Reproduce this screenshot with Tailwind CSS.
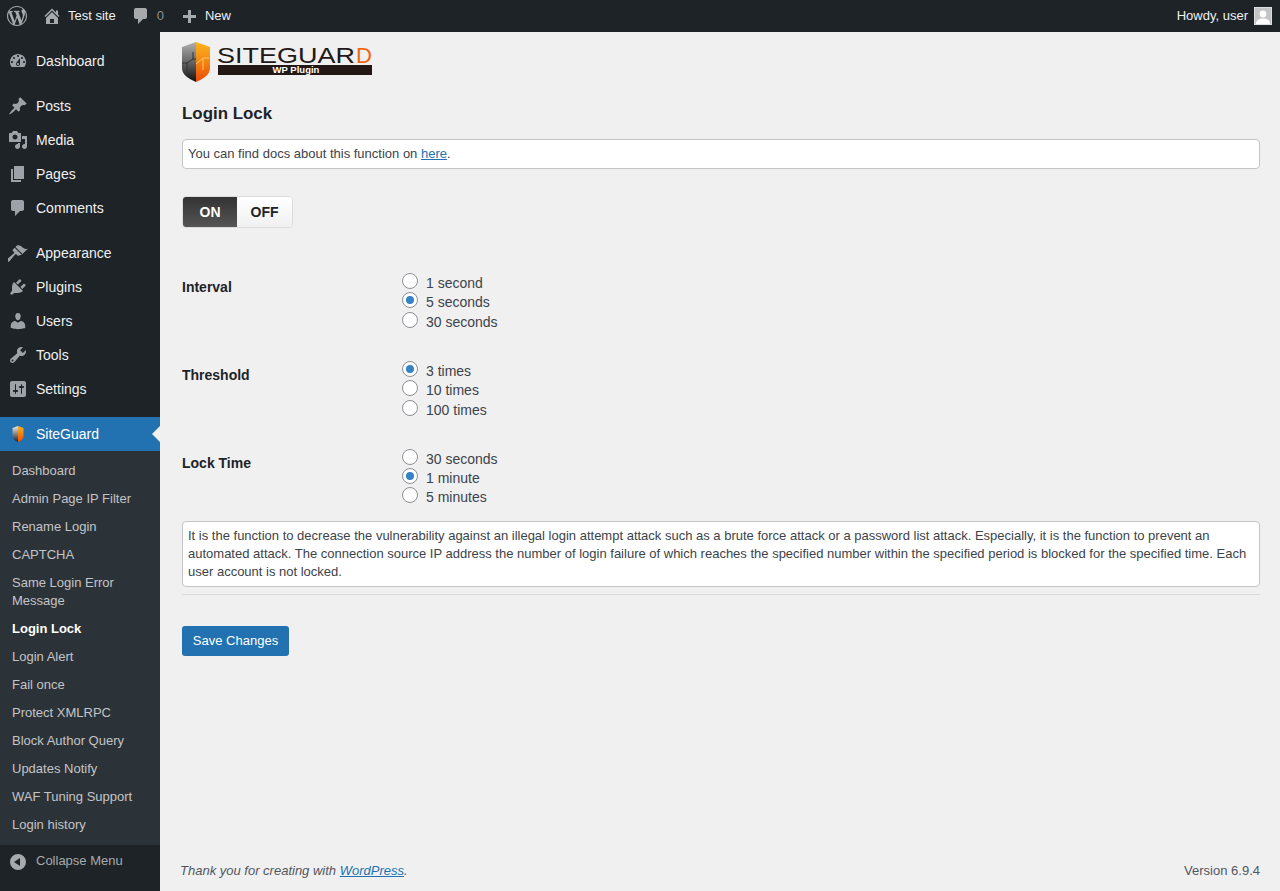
<!DOCTYPE html>
<html lang="en">
<head>
    <meta charset="UTF-8">
    <meta name="viewport" content="width=device-width, initial-scale=1.0">
    <title>Login Lock</title>
    <script src="https://cdn.jsdelivr.net/npm/@tailwindcss/browser@4"></script>
</head>
<body class="bg-[#f0f0f1] text-[#3c434a] font-['Liberation_Sans',Arial,sans-serif] text-[13px] leading-[18px] h-[891px] overflow-hidden">

    <!-- admin bar -->
    <header class="h-8 bg-[#1d2327] flex items-center justify-between text-[#f0f0f1]">
        <div class="flex items-center h-8">
            <svg class="w-5 h-5 ml-[7px] fill-[#a7aaad]" viewBox="0 0 20 20"><path d="M20 10c0-5.51-4.49-10-10-10C4.48 0 0 4.49 0 10c0 5.52 4.48 10 10 10 5.51 0 10-4.48 10-10zM7.78 15.37L4.37 6.22c.55-.02 1.17-.08 1.17-.08.5-.06.44-1.13-.06-1.11 0 0-1.45.11-2.37.11-.18 0-.37 0-.58-.01C4.12 2.69 6.87 1.11 10 1.11c2.33 0 4.45.87 6.05 2.34-.68-.11-1.65.39-1.65 1.58 0 .74.45 1.36.9 2.1.35.61.55 1.36.55 2.46 0 1.49-1.4 5-1.4 5l-3.03-8.37c.54-.02.82-.17.82-.17.5-.05.44-1.25-.06-1.22 0 0-1.44.12-2.38.12-.87 0-2.33-.12-2.33-.12-.5-.03-.56 1.2-.06 1.22l.92.08 1.26 3.41zM17.41 10c.24-.64.74-1.87.43-4.25.7 1.29 1.05 2.71 1.05 4.25 0 3.29-1.73 6.24-4.4 7.78.97-2.59 1.94-5.2 2.92-7.78zM6.1 18.09C3.12 16.65 1.11 13.53 1.11 10c0-1.3.23-2.48.72-3.59C3.25 10.3 4.67 14.2 6.1 18.09zm4.03-6.63l2.58 6.98c-.86.29-1.76.45-2.71.45-.79 0-1.57-.11-2.29-.33.81-2.38 1.62-4.74 2.42-7.1z"/></svg>
            <svg class="w-5 h-5 ml-[15px] fill-[#a7aaad]" viewBox="0 0 20 20"><path d="M16 8.5l1.53 1.53-1.06 1.06L10 4.62l-6.47 6.47-1.06-1.06L10 2.5l4 4v-2h2v4zm-6-2.46l6 5.99V18H4v-6.03zM8 17h4v-4H8v4z"/></svg>
            <span class="ml-1.5">Test site</span>
            <svg class="w-5 h-5 ml-[15px] fill-[#a7aaad]" viewBox="0 0 20 20"><path d="M5 2h9c1.1 0 2 .9 2 2v7c0 1.1-.9 2-2 2h-2l-5 5v-5H5c-1.1 0-2-.9-2-2V4c0-1.1.9-2 2-2z"/></svg>
            <span class="ml-1.5 text-[#8c8f94]">0</span>
            <svg class="w-5 h-5 ml-[15px] mt-1 fill-[#a7aaad]" viewBox="0 0 20 20"><path d="M17 7v3h-5v5H9v-5H4V7h5V2h3v5h5z"/></svg>
            <span class="ml-1.5">New</span>
        </div>
        <div class="flex items-center gap-1.5 pr-2">
            <span>Howdy, user</span>
            <div class="w-[18px] h-[18px] bg-[#c3c4c7] border border-[#dcdcde] overflow-hidden">
                <svg class="w-4 h-4 fill-white" viewBox="0 0 16 16"><circle cx="8" cy="6" r="3.4"/><path d="M1 16c0-4 3-5.5 7-5.5s7 1.5 7 5.5z"/></svg>
            </div>
        </div>
    </header>

    <div class="flex h-[859px]">
        <!-- sidebar -->
        <aside class="w-40 shrink-0 bg-[#1d2327] text-[#f0f0f1] text-sm pt-3">
            <a class="flex items-center h-[34px] pl-2 gap-2 mb-[11px]">
                <svg class="w-5 h-5 fill-[#9ca2a7]" viewBox="0 0 20 20"><path d="M3.76 16h12.48c1.1-1.37 1.76-3.11 1.76-5 0-4.42-3.58-8-8-8s-8 3.58-8 8c0 1.89.66 3.63 1.76 5zM10 4c.55 0 1 .45 1 1s-.45 1-1 1-1-.45-1-1 .45-1 1-1zM6 6c.55 0 1 .45 1 1s-.45 1-1 1-1-.45-1-1 .45-1 1-1zm8 0c.55 0 1 .45 1 1s-.45 1-1 1-1-.45-1-1 .45-1 1-1zm-5.37 5.55L12 7v6c0 1.1-.9 2-2 2s-2-.9-2-2c0-.57.24-1.08.63-1.45zM4 10c.55 0 1 .45 1 1s-.45 1-1 1-1-.45-1-1 .45-1 1-1zm12 0c.55 0 1 .45 1 1s-.45 1-1 1-1-.45-1-1 .45-1 1-1zm-5 3c0-.55-.45-1-1-1s-1 .45-1 1 .45 1 1 1 1-.45 1-1z"/></svg>
                Dashboard
            </a>
            <a class="flex items-center h-[34px] pl-2 gap-2">
                <svg class="w-5 h-5 fill-[#9ca2a7]" viewBox="0 0 20 20"><path d="M10.44 3.02l1.82-1.82 6.36 6.35-1.83 1.82c-1.05-.68-2.48-.57-3.41.36l-.75.75c-.92.93-1.04 2.35-.35 3.41l-1.83 1.82-2.41-2.41-2.8 2.79c-.42.42-3.38 2.71-3.8 2.29s1.86-3.39 2.28-3.81l2.79-2.79L4.1 9.36l1.83-1.82c1.05.69 2.48.57 3.4-.36l.75-.75c.93-.92 1.05-2.35.36-3.41z"/></svg>
                Posts
            </a>
            <a class="flex items-center h-[34px] pl-2 gap-2">
                <svg class="w-5 h-5 fill-[#9ca2a7]" viewBox="0 0 20 20"><path d="M13 11V4c0-.55-.45-1-1-1h-1.67L9 1H5L3.67 3H2c-.55 0-1 .45-1 1v7c0 .55.45 1 1 1h10c.55 0 1-.45 1-1zM7 4.5c1.38 0 2.5 1.12 2.5 2.5S8.38 9.5 7 9.5 4.5 8.38 4.5 7 5.62 4.5 7 4.5zM14 6h5v10.5c0 1.38-1.12 2.5-2.5 2.5S14 17.88 14 16.5s1.12-2.5 2.5-2.5c.17 0 .34.02.5.05V9h-3V6zm-4 8.05V13h2v3.5c0 1.38-1.12 2.5-2.5 2.5S7 17.88 7 16.5 8.12 14 9.5 14c.17 0 .34.02.5.05z"/></svg>
                Media
            </a>
            <a class="flex items-center h-[34px] pl-2 gap-2">
                <svg class="w-5 h-5 fill-[#9ca2a7]" viewBox="0 0 20 20"><path d="M6 15V2h10v13H6zm-1 1h8v2H3V5h2v11z"/></svg>
                Pages
            </a>
            <a class="flex items-center h-[34px] pl-2 gap-2 mb-[11px]">
                <svg class="w-5 h-5 fill-[#9ca2a7]" viewBox="0 0 20 20"><path d="M5 2h9c1.1 0 2 .9 2 2v7c0 1.1-.9 2-2 2h-2l-5 5v-5H5c-1.1 0-2-.9-2-2V4c0-1.1.9-2 2-2z"/></svg>
                Comments
            </a>
            <a class="flex items-center h-[34px] pl-2 gap-2">
                <svg class="w-5 h-5 fill-[#9ca2a7]" viewBox="0 0 20 20"><path d="M14.48 11.06L7.41 3.99l1.5-1.5c.5-.56 2.3-.47 3.51.32 1.21.8 1.43 1.28 2.91 2.1 1.18.64 2.45 1.26 4.45.85zm-.71.71L6.7 4.7 4.93 6.47c-.39.39-.39 1.02 0 1.41l1.06 1.06c.39.39.39 1.03 0 1.42-.6.6-6.48 5.32-6.48 5.32-.93.78-1.01 1.94-.32 2.63.7.69 1.85.61 2.63-.32 0 0 4.72-5.88 5.32-6.48.39-.39 1.03-.39 1.42 0l1.06 1.06c.39.39 1.02.39 1.41 0z"/></svg>
                Appearance
            </a>
            <a class="flex items-center h-[34px] pl-2 gap-2">
                <svg class="w-5 h-5 fill-[#9ca2a7]" viewBox="0 0 20 20"><path d="M13.11 4.36L9.87 7.6 8 5.73l3.24-3.24c.35-.34 1.05-.2 1.56.32.52.51.66 1.21.31 1.55zm-8 1.77l.91-1.12 9.01 9.01-1.19.84c-.71.71-2.63 1.16-3.82 1.16H6.14L4.9 17.26c-.59.59-1.54.59-2.12 0-.59-.58-.59-1.53 0-2.12l1.24-1.24v-3.88c0-1.13.4-3.19 1.09-3.89zm7.26 3.97l3.24-3.24c.34-.35 1.04-.21 1.55.31.52.51.66 1.21.31 1.55l-3.24 3.25z"/></svg>
                Plugins
            </a>
            <a class="flex items-center h-[34px] pl-2 gap-2">
                <svg class="w-5 h-5 fill-[#9ca2a7]" viewBox="0 0 20 20"><path d="M10 9.25c-2.27 0-2.73-3.44-2.73-3.44C7 4.02 7.82 2 9.97 2c2.16 0 2.98 2.02 2.71 3.81 0 0-.41 3.44-2.68 3.44zm0 2.57L12.72 10c2.39 0 4.52 2.33 4.52 4.53v2.49s-3.65 1.13-7.24 1.13c-3.65 0-7.24-1.13-7.24-1.13v-2.49c0-2.25 1.94-4.48 4.47-4.48z"/></svg>
                Users
            </a>
            <a class="flex items-center h-[34px] pl-2 gap-2">
                <svg class="w-5 h-5 fill-[#9ca2a7]" viewBox="0 0 20 20"><path d="M16.68 9.77c-1.34 1.34-3.3 1.67-4.95.99l-5.41 6.52c-.99.99-2.59.99-3.58 0s-.99-2.59 0-3.57l6.52-5.42c-.68-1.65-.35-3.61.99-4.95 1.28-1.28 3.12-1.62 4.72-1.06l-2.89 2.89 2.82 2.82 2.86-2.87c.53 1.58.18 3.39-1.08 4.65zM3.81 16.21c.4.39 1.04.39 1.43 0 .4-.4.4-1.04 0-1.43-.39-.4-1.03-.4-1.43 0-.39.39-.39 1.03 0 1.43z"/></svg>
                Tools
            </a>
            <a class="flex items-center h-[34px] pl-2 gap-2 mb-[11px]">
                <svg class="w-5 h-5 fill-[#9ca2a7]" viewBox="0 0 20 20"><path d="M18 16V4c0-1.1-.9-2-2-2H4c-1.1 0-2 .9-2 2v12c0 1.1.9 2 2 2h12c1.1 0 2-.9 2-2zM8 11h1c.55 0 1 .45 1 1s-.45 1-1 1H8v1.5c0 .28-.22.5-.5.5s-.5-.22-.5-.5V13H6c-.55 0-1-.45-1-1s.45-1 1-1h1V5.5c0-.28.22-.5.5-.5s.5.22.5.5V11zm5-2h-1c-.55 0-1-.45-1-1s.45-1 1-1h1V5.5c0-.28.22-.5.5-.5s.5.22.5.5V7h1c.55 0 1 .45 1 1s-.45 1-1 1h-1v5.5c0 .28-.22.5-.5.5s-.5-.22-.5-.5V9z"/></svg>
                Settings
            </a>
            <a class="relative flex items-center h-[34px] pl-2 gap-2 bg-[#2271b1] text-white">
                <svg class="w-5 h-5" viewBox="0 0 20 20">
                    <defs>
                        <linearGradient id="miniLeft" x1="0" y1="0" x2="0" y2="1">
                            <stop offset="0" stop-color="#e8e8e8"/>
                            <stop offset="1" stop-color="#222"/>
                        </linearGradient>
                        <linearGradient id="miniRight" x1="0" y1="0" x2="0" y2="1">
                            <stop offset="0" stop-color="#fbb41f"/>
                            <stop offset="1" stop-color="#ea4a06"/>
                        </linearGradient>
                    </defs>
                    <path d="M10 2L4.5 4v8c0 3 2.5 5 5.5 6z" fill="url(#miniLeft)"/>
                    <path d="M10 2l5.5 2v8c0 3-2.5 5-5.5 6z" fill="url(#miniRight)"/>
                </svg>
                SiteGuard
                <span class="absolute right-0 top-[9px] border-y-8 border-r-8 border-y-transparent border-r-[#f0f0f1]"></span>
            </a>
            <nav class="bg-[#2c3338] pt-[6px] pb-[6px] text-[13px] leading-[18px] text-[#c3c4c7]">
                <a class="block px-3 py-[5px]">Dashboard</a>
                <a class="block px-3 py-[5px]">Admin Page IP Filter</a>
                <a class="block px-3 py-[5px]">Rename Login</a>
                <a class="block px-3 py-[5px]">CAPTCHA</a>
                <a class="block px-3 py-[5px]">Same Login Error Message</a>
                <a class="block px-3 py-[5px] font-semibold text-white">Login Lock</a>
                <a class="block px-3 py-[5px]">Login Alert</a>
                <a class="block px-3 py-[5px]">Fail once</a>
                <a class="block px-3 py-[5px]">Protect XMLRPC</a>
                <a class="block px-3 py-[5px]">Block Author Query</a>
                <a class="block px-3 py-[5px]">Updates Notify</a>
                <a class="block px-3 py-[5px]">WAF Tuning Support</a>
                <a class="block px-3 py-[5px]">Login history</a>
            </nav>
            <a class="flex items-start pl-2 gap-2 pt-[7px] text-[13px] leading-[18px] text-[#a7aaad]">
                <svg class="w-5 h-5 fill-[#a7aaad]" viewBox="0 0 20 20"><path d="M10 18a8 8 0 1 0 0-16 8 8 0 1 0 0 16zm2-12v8l-6-4z"/></svg>
                Collapse Menu
            </a>
        </aside>

        <!-- content -->
        <div class="flex-1 flex flex-col">
            <main class="pl-[22px] pr-5 flex-1">
                <div class="pt-2.5 h-[50px]">
                    <svg class="block w-[192px] h-10" viewBox="0 0 192 40">
                        <defs>
                            <linearGradient id="shieldLeft" x1="0" y1="0" x2="0" y2="1">
                                <stop offset="0" stop-color="#b0b0b0"/>
                                <stop offset="0.5" stop-color="#666"/>
                                <stop offset="1" stop-color="#111"/>
                            </linearGradient>
                            <linearGradient id="shieldRight" x1="0" y1="0" x2="0" y2="1">
                                <stop offset="0" stop-color="#fbb41f"/>
                                <stop offset="0.45" stop-color="#f58a12"/>
                                <stop offset="1" stop-color="#ea4a06"/>
                            </linearGradient>
                        </defs>
                        <path d="M14 0L0 5v21c0 7 7 11 14 14z" fill="url(#shieldLeft)"/>
                        <path d="M14 0l14 5v21c0 7-7 11-14 14z" fill="url(#shieldRight)"/>
                        <path d="M0 21h5l6-4h3M11 10v7M5 21v8" fill="none" stroke="#333" stroke-width="1"/>
                        <path d="M14 22l7-6h6M21 16v12" fill="none" stroke="#fcc66a" stroke-width="1"/>
                        <text x="35" y="21" font-family="Liberation Sans" font-size="22" fill="#231815" textLength="138" lengthAdjust="spacingAndGlyphs">SITEGUAR</text>
                        <text x="174" y="21" font-family="Liberation Sans" font-size="22" fill="#f0660f" textLength="16" lengthAdjust="spacingAndGlyphs">D</text>
                        <rect x="36" y="23" width="154" height="10" fill="#231815"/>
                        <text x="114" y="31" text-anchor="middle" font-family="Liberation Sans" font-weight="700" font-size="9.5" fill="#fff">WP Plugin</text>
                    </svg>
                </div>
                <h1 class="mt-[21px] font-bold text-[16.9px] leading-[22px] text-[#1d2327]">Login Lock</h1>
                <div class="mt-[14px] h-[30px] px-[5px] py-[5px] bg-white border border-[#c3c4c7] rounded-[4px]">You can find docs about this function on <a class="text-[#2271b1] underline">here</a>.</div>

                <div class="mt-[27px] w-[111px] h-8 flex border border-[#dcdcde] rounded-[4px] bg-white font-bold text-sm overflow-hidden">
                    <span class="w-[54px] flex items-center justify-center text-white bg-gradient-to-b from-[#333] to-[#555]">ON</span>
                    <span class="flex-1 flex items-center justify-center text-[#1d2327] bg-gradient-to-b from-white to-[#f0f0f1]">OFF</span>
                </div>

                <div class="mt-[30px] grid grid-cols-[220px_1fr] text-sm">
                    <div class="pt-5 font-bold text-[#1d2327] leading-[18px]">Interval</div>
                    <div class="pt-[14.9px] h-[87.9px]">
                        <label class="flex gap-2 h-[19.5px]"><input type="radio" name="interval" class="appearance-none flex items-center justify-center w-4 h-4 shrink-0 rounded-full border border-[#8c8f94] bg-white before:hidden checked:before:block before:w-2 before:h-2 before:rounded-full before:bg-[#3582c4]"><span class="leading-5">1 second</span></label>
                        <label class="flex gap-2 h-[19.5px]"><input type="radio" name="interval" checked class="appearance-none flex items-center justify-center w-4 h-4 shrink-0 rounded-full border border-[#8c8f94] bg-white before:hidden checked:before:block before:w-2 before:h-2 before:rounded-full before:bg-[#3582c4]"><span class="leading-5">5 seconds</span></label>
                        <label class="flex gap-2 h-[19.5px]"><input type="radio" name="interval" class="appearance-none flex items-center justify-center w-4 h-4 shrink-0 rounded-full border border-[#8c8f94] bg-white before:hidden checked:before:block before:w-2 before:h-2 before:rounded-full before:bg-[#3582c4]"><span class="leading-5">30 seconds</span></label>
                    </div>
                    <div class="pt-5 font-bold text-[#1d2327] leading-[18px]">Threshold</div>
                    <div class="pt-[14.9px] h-[87.9px]">
                        <label class="flex gap-2 h-[19.5px]"><input type="radio" name="threshold" checked class="appearance-none flex items-center justify-center w-4 h-4 shrink-0 rounded-full border border-[#8c8f94] bg-white before:hidden checked:before:block before:w-2 before:h-2 before:rounded-full before:bg-[#3582c4]"><span class="leading-5">3 times</span></label>
                        <label class="flex gap-2 h-[19.5px]"><input type="radio" name="threshold" class="appearance-none flex items-center justify-center w-4 h-4 shrink-0 rounded-full border border-[#8c8f94] bg-white before:hidden checked:before:block before:w-2 before:h-2 before:rounded-full before:bg-[#3582c4]"><span class="leading-5">10 times</span></label>
                        <label class="flex gap-2 h-[19.5px]"><input type="radio" name="threshold" class="appearance-none flex items-center justify-center w-4 h-4 shrink-0 rounded-full border border-[#8c8f94] bg-white before:hidden checked:before:block before:w-2 before:h-2 before:rounded-full before:bg-[#3582c4]"><span class="leading-5">100 times</span></label>
                    </div>
                    <div class="pt-5 font-bold text-[#1d2327] leading-[18px]">Lock Time</div>
                    <div class="pt-[14.9px] h-[87.2px]">
                        <label class="flex gap-2 h-[19.3px]"><input type="radio" name="locktime" class="appearance-none flex items-center justify-center w-4 h-4 shrink-0 rounded-full border border-[#8c8f94] bg-white before:hidden checked:before:block before:w-2 before:h-2 before:rounded-full before:bg-[#3582c4]"><span class="leading-5">30 seconds</span></label>
                        <label class="flex gap-2 h-[19.3px]"><input type="radio" name="locktime" checked class="appearance-none flex items-center justify-center w-4 h-4 shrink-0 rounded-full border border-[#8c8f94] bg-white before:hidden checked:before:block before:w-2 before:h-2 before:rounded-full before:bg-[#3582c4]"><span class="leading-5">1 minute</span></label>
                        <label class="flex gap-2 h-[19.3px]"><input type="radio" name="locktime" class="appearance-none flex items-center justify-center w-4 h-4 shrink-0 rounded-full border border-[#8c8f94] bg-white before:hidden checked:before:block before:w-2 before:h-2 before:rounded-full before:bg-[#3582c4]"><span class="leading-5">5 minutes</span></label>
                    </div>
                </div>

                <div class="h-[66px] px-[5px] py-[5px] bg-white border border-[#c3c4c7] rounded-[4px]">It is the function to decrease the vulnerability against an illegal login attempt attack such as a brute force attack or a password list attack. Especially, it is the function to prevent an automated attack. The connection source IP address the number of login failure of which reaches the specified number within the specified period is blocked for the specified time. Each user account is not locked.</div>
                <hr class="mt-[7px] border-t border-[#dcdcde]">
                <button class="mt-[31px] block w-[107px] h-[30px] bg-[#2271b1] text-white rounded-[3px]">Save Changes</button>
            </main>
            <footer class="flex justify-between pl-5 pr-5 pb-[11px] text-[#50575e]">
                <span class="italic">Thank you for creating with <a class="text-[#2271b1] underline">WordPress</a>.</span>
                <span>Version 6.9.4</span>
            </footer>
        </div>
    </div>
</body>
</html>
